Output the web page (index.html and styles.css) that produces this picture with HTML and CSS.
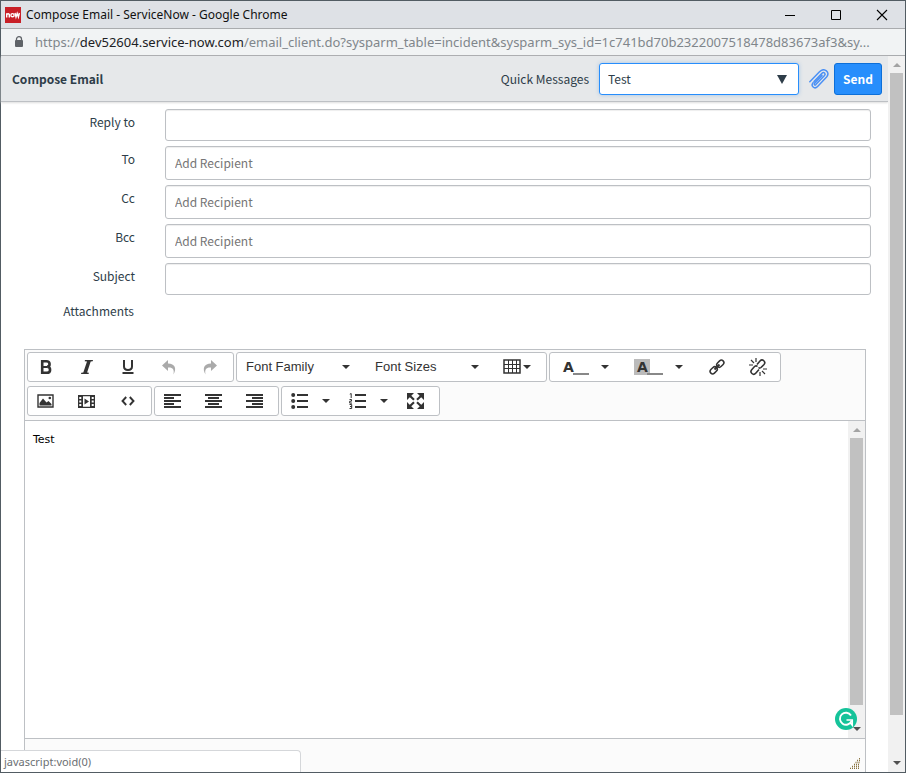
FILE: index.html
```html
<!DOCTYPE html>
<html lang="en">
<head>
<meta charset="utf-8">
<title>Compose Email - ServiceNow</title>
<link rel="stylesheet" href="styles.css">
</head>
<body>
<div class="window">
  <header class="titlebar">
    <svg class="favicon" width="16" height="16" viewBox="0 0 16 16" aria-hidden="true"><rect width="16" height="16" fill="#c81f27"/><g fill="none" stroke="#fff" stroke-width="1.4"><path d="M1.7 10.500V6.200M1.700 7.500q1.500-1.500 2.600 0v3"/><circle cx="7.500" cy="8.200" r="1.600"/><path d="M10 6l1 4 1.200-3.500L13.400 10l1-4"/></g></svg>
    <span class="title">Compose Email - ServiceNow - Google Chrome</span>
    <button class="winbtn" aria-label="Minimize"><svg width="12" height="12" viewBox="0 0 12 12"><path d="M1 6.500h10" stroke="#000"/></svg></button>
    <button class="winbtn" aria-label="Maximize"><svg width="12" height="12" viewBox="0 0 12 12"><path d="M1.500 1.500h9v9h-9z" fill="none" stroke="#000"/></svg></button>
    <button class="winbtn" aria-label="Close"><svg width="12" height="12" viewBox="0 0 12 12"><path d="M1 1l10 10M11 1L1 11" stroke="#000" stroke-width="1.100"/></svg></button>
  </header>
  <div class="address">
    <svg width="10" height="12" viewBox="0 0 10 12" aria-hidden="true"><path d="M2.500 5V3a2.500 2.300 0 0 1 5 0v2" fill="none" stroke="#5f6368" stroke-width="1.300"/><rect x="1" y="4" width="8" height="7" rx="1" fill="#5f6368"/></svg>
    <span class="url">https://<b>dev52604.service-now.com</b>/email_client.do?sysparm_table=incident&amp;sysparm_sys_id=1c741bd70b2322007518478d83673af3&amp;sy...</span>
  </div>
  <div class="viewport">
    <main class="page">
      <div class="header">
        <h1>Compose Email</h1>
        <label for="quick">Quick Messages</label>
        <div class="select">
          <select id="quick"><option>Test</option></select>
          <svg width="10" height="9" viewBox="0 0 10 9" aria-hidden="true"><path d="M0 0h10L5 9z" fill="#2e3d49"/></svg>
        </div>
        <button class="clip" aria-label="Add attachment"><svg width="20" height="20" viewBox="0 0 20 20" fill="none" stroke="#4a90f5" stroke-width="1.500" stroke-linecap="round" stroke-linejoin="round"><path d="M5 12.500l8-8.300c1.800-1.800 4.200.4 2.500 2.300l-8.700 9.100c-.9.900-2.200-.3-1.300-1.300l7.500-7.900"/><path d="M.8 12.700l9.700-10c4.800-4.600 11.300.6 7.100 5.300l-9 9.500c-3.200 3.300-7.200-.6-4.500-3.900"/></svg></button>
        <button class="send">Send</button>
      </div>
      <form class="fields">
        <label for="reply">Reply to</label><input id="reply" type="text">
        <label for="to">To</label><input id="to" class="recipient" type="text" placeholder="Add Recipient">
        <label for="cc">Cc</label><input id="cc" class="recipient" type="text" placeholder="Add Recipient">
        <label for="bcc">Bcc</label><input id="bcc" class="recipient" type="text" placeholder="Add Recipient">
        <label for="subject">Subject</label><input id="subject" type="text">
        <span class="fieldname">Attachments</span>
      </form>
      <section class="editor">
        <div class="toolbar">
          <div class="row">
            <div class="group">
              <button class="tool" aria-label="Bold"><svg width="16" height="16" viewBox="0 0 16 16"><path d="M4.200 2.300v11.500h4.300c5 0 4.300-5.800.7-6 3.300-.6 3.300-5.500-.9-5.500z" fill="none" stroke="#333" stroke-width="2.600"/><path d="M4 8h5" stroke="#333" stroke-width="2"/></svg></button>
              <button class="tool" aria-label="Italic"><svg width="16" height="16" viewBox="0 0 16 16" fill="#333"><path d="M6 1h8l-.3 1.200-2 .4-3.600 10.800 1.800.4-.3 1.200H2l.3-1.200 2-.4L8 2.600l-2.300-.4z"/></svg></button>
              <button class="tool" aria-label="Underline"><svg width="16" height="16" viewBox="0 0 16 16"><path d="M4 1v6.500c0 4.600 8 4.600 8 0V1" fill="none" stroke="#333" stroke-width="2"/><path d="M2.500 14h11" stroke="#333" stroke-width="2"/></svg></button>
              <button class="tool" aria-label="Undo"><svg width="16" height="16" viewBox="0 0 16 16" fill="#aaa"><path d="M7 1v3.500c7 0 9 5 5.500 11 .9-5-.5-7.300-5.500-7V12L1 6.500z"/></svg></button>
              <button class="tool" aria-label="Redo"><svg width="16" height="16" viewBox="0 0 16 16" fill="#aaa"><path d="M9 1v3.500c-7 0-9 5-5.500 11-.9-5 .5-7.300 5.500-7V12l6-5.500z"/></svg></button>
            </div>
            <div class="group">
              <button class="menu">Font Family<i class="caret"></i></button>
              <button class="menu">Font Sizes<i class="caret"></i></button>
              <button class="tabletool" aria-label="Table"><svg width="18" height="16" viewBox="0 0 18 16"><path d="M1 1h16v13H1z" fill="none" stroke="#333" stroke-width="1.500"/><path d="M1 5.500h16M1 9.500h16M5.500 1v13M9.500 1v13M13.500 1v13" stroke="#333"/></svg><i class="caret"></i></button>
            </div>
            <div class="group">
              <button class="color" aria-label="Text color"><span class="letter">A</span><span class="swatch"></span><i class="caret"></i></button>
              <button class="color" aria-label="Background color"><span class="letter filled">A</span><span class="swatch"></span><i class="caret"></i></button>
              <button class="tool link" aria-label="Insert link"><svg width="18" height="18" viewBox="0 0 18 18" fill="none" stroke="#333" stroke-width="1.500"><rect x="-4" y="-2.500" width="8" height="5" rx="2.500" transform="translate(12.300 5.700) rotate(-45)"/><rect x="-4" y="-2.500" width="8" height="5" rx="2.500" transform="translate(5.700 12.300) rotate(-45)"/><path d="M6.500 11.500l5-5" stroke-width="2"/></svg></button>
              <button class="tool link" aria-label="Remove link"><svg width="18" height="18" viewBox="0 0 18 18" fill="none" stroke="#333" stroke-width="1.600"><path d="M8 6.500l3-3.500c2.500-2.700 6.300.8 4 3.500L12 9.500c-1 .8-2 .5-2.500 0M8.500 8.500c-1-1-2-.8-3 0L2.700 11.700c-2.300 2.700 1.600 6.200 4 3.500L10 11.500"/><path d="M2 2l3 3M7 0v4M0 7h4M13 13l3 3M11 14v4M14 11h4" stroke-width="1.200"/></svg></button>
            </div>
          </div>
          <div class="row">
            <div class="group">
              <button class="tool" aria-label="Insert image"><svg width="17" height="14" viewBox="0 0 17 14"><path d="M1 1h15v12H1z" fill="none" stroke="#333" stroke-width="1.400"/><path d="M2.500 11.500V9l3.500-4.500 3.500 4L11.500 7l3 3v1.500z" fill="#333"/><circle cx="12.800" cy="4" r="1.300" fill="#333"/></svg></button>
              <button class="tool" aria-label="Insert video"><svg width="17" height="13" viewBox="0 0 17 13"><path d="M0 0h17v13H0z" fill="#333"/><path d="M5 1.300h7v10.400H5zM1.300 2h2v2h-2zM1.300 5.500h2v2h-2zM1.300 9h2v2h-2zM13.700 2h2v2h-2zM13.700 5.500h2v2h-2zM13.700 9h2v2h-2z" fill="#fff"/><path d="M6.500 3.500L11 6.500l-4.500 3z" fill="#333"/></svg></button>
              <button class="tool" aria-label="Source code"><svg width="14" height="10" viewBox="0 0 14 10" fill="none" stroke="#333" stroke-width="1.900"><path d="M5.200 1L1.500 5l3.700 4M8.800 1l3.700 4-3.700 4"/></svg></button>
            </div>
            <div class="group">
              <button class="tool" aria-label="Align left"><svg width="17" height="14" viewBox="0 0 17 14" fill="#333"><path d="M0 0h17v2H0zM0 3h10v2H0zM0 6h17v2H0zM0 9h10v2H0zM0 12h17v2H0z"/></svg></button>
              <button class="tool" aria-label="Align center"><svg width="17" height="14" viewBox="0 0 17 14" fill="#333"><path d="M0 0h17v2H0zM3 3h11v2H3zM0 6h17v2H0zM3 9h11v2H3zM0 12h17v2H0z"/></svg></button>
              <button class="tool" aria-label="Align right"><svg width="17" height="14" viewBox="0 0 17 14" fill="#333"><path d="M0 0h17v2H0zM6 3h11v2H6zM0 6h17v2H0zM6 9h11v2H6zM0 12h17v2H0z"/></svg></button>
            </div>
            <div class="group">
              <button class="list" aria-label="Bullet list"><svg width="17" height="16" viewBox="0 0 17 16" fill="#333"><circle cx="2.200" cy="2" r="2"/><circle cx="2.200" cy="8" r="2"/><circle cx="2.200" cy="14" r="2"/><path d="M6 1h11v2H6zM6 7h11v2H6zM6 13h11v2H6z"/></svg><i class="caret"></i></button>
              <button class="list" aria-label="Numbered list"><svg width="17" height="16" viewBox="0 0 17 16" fill="#333"><path d="M6 1h11v2H6zM6 7h11v2H6zM6 13h11v2H6z"/><path d="M.8 1.200L2.200.500V5M.5 6.500h2v1.700h-1.800v1.900h2.300M.5 11.500h2.200v4H.5M1 13.500h1.700" fill="none" stroke="#333"/></svg><i class="caret"></i></button>
              <button class="tool" aria-label="Fullscreen"><svg width="17" height="16" viewBox="0 0 17 16"><path d="M0 0h7L0 7zM17 0v7l-7-7zM0 16V9l7 7zM17 16h-7l7-7z" fill="#333"/><path d="M2 2l5 4.700M15 2l-5 4.700M2 14l5-4.700M15 14l-5-4.700" stroke="#333" stroke-width="2.200"/></svg></button>
            </div>
          </div>
        </div>
        <div class="body">
          <div class="content" contenteditable="true" role="textbox" aria-label="Message body">Test</div>
          <div class="scrollbar"><i class="up"></i><i class="thumb"></i><i class="down"></i></div>
          <svg class="grammarly" width="22" height="22" viewBox="0 0 22 22" aria-hidden="true"><circle cx="11" cy="11" r="11" fill="#15c39a"/><path d="M16 7.500A6 6 0 1 0 16.500 13" fill="none" stroke="#fff" stroke-width="1.900"/><path d="M11.500 12h5.700v5l-2-2.300" fill="none" stroke="#fff" stroke-width="1.700"/></svg>
        </div>
        <footer class="status"><svg width="11" height="11" viewBox="0 0 11 11" aria-hidden="true"><path d="M9 .5h1M7 2.500h3M5.500 4.500H10M4 6.500h6M2 8.500h8M0 10.500h10" stroke="#8a7440" stroke-dasharray="1 1" stroke-width="1.400"/></svg></footer>
      </section>
    </main>
    <div class="scrollbar outer"><i class="up"></i><i class="thumb"></i><i class="down"></i></div>
  </div>
  <div class="linkstatus">javascript:void(0)</div>
</div>
</body>
</html>
```

FILE: styles.css
```css
* { box-sizing: border-box; }
body { margin: 0; font: 12px/20px "Noto Sans CJK SC", sans-serif; color: #2e3d49; }
button { border: 0; background: none; padding: 0; color: inherit; font: inherit; }
svg { display: block; flex: none; }

.window { position: relative; display: flex; flex-direction: column; height: 100vh; border: 1px solid #525c63; background: #fff; }
.titlebar { display: flex; align-items: center; height: 28px; padding-left: 4px; background: #dee1e6; border-bottom: 1px solid #a9abae; font: 12px/16px "Noto Sans", sans-serif; color: #111; }
.title { flex: 1; margin-left: 5px; }
.winbtn { display: grid; place-items: center; width: 46px; height: 27px; }
.address { display: flex; align-items: center; height: 27px; padding: 0 10px 0 13px; background: #f1f3f4; border-bottom: 1px solid #a9abae; font: 13px/20px "Noto Sans", sans-serif; color: #80868b; }
.url { flex: 1; margin-left: 11px; overflow: hidden; white-space: nowrap; text-overflow: ellipsis; }
.url b { font-weight: normal; color: #202124; }

.viewport { display: flex; flex: 1; min-height: 0; }
.page { display: flex; flex: 1; flex-direction: column; min-width: 0; }
.header { display: flex; align-items: center; height: 46px; padding: 0 6px 0 11px; background: #e6e8ea; border-bottom: 1px solid #bdc0c4; box-shadow: 0 1px 2px #ddd; }
.header h1 { flex: 1; margin: 0; font-size: 12px; line-height: 20px; font-weight: bold; }
.select { position: relative; width: 200px; margin-left: 10px; }
.select select { display: block; width: 100%; height: 32px; padding: 0 8px; appearance: none; border: 1px solid #278efc; border-radius: 3px; background: #fff; box-shadow: 0 0 4px #a9c5e4; font: inherit; color: inherit; }
.select svg { position: absolute; top: 12px; right: 12px; pointer-events: none; }
.clip { margin: 0 5px 0 10px; }
.send { width: 48px; height: 32px; border: 1px solid #0d6fd8; border-radius: 3px; background: #278efc; color: #fff; font-weight: bold; }

.fields { display: grid; grid-template-columns: 134px 1fr; column-gap: 30px; row-gap: 5px; padding: 7px 17px 0 0; }
.fields label { padding-top: 3px; text-align: right; }
.fieldname { padding: 1px 1px 1px 0; text-align: right; }
.fields input { width: 100%; height: 32px; padding: 0 9px 2px; border: 1px solid #bdc0c4; border-radius: 3px; background: #fff; box-shadow: inset 0 1px 1px #eee; font: inherit; color: inherit; }
.fields .recipient { height: 34px; }
.fields input::placeholder { color: #757575; opacity: 1; }

.editor { display: flex; flex: 1; flex-direction: column; min-height: 0; margin: 27px 22px 0 23px; border: 1px solid #bdc0c4; border-bottom: 0; }
.toolbar { display: grid; gap: 4px; padding: 2px 2px 4px; background: #fbfbfb; border-bottom: 1px solid #bdc0c4; }
.row { display: flex; gap: 2px; }
.group { display: flex; height: 30px; border: 1px solid #bdc0c4; border-radius: 3px; background: #fff; }
.group button { display: flex; align-items: center; height: 28px; color: #333; }
.group .tool { justify-content: center; width: 41px; padding-right: 6px; }
.group .link { padding-right: 3px; }
.group .menu { justify-content: space-between; width: 129px; padding: 0 16px 0 9px; font: 13px/20px "Liberation Sans", sans-serif; }
.group .tabletool { gap: 2px; width: 51px; padding-left: 8px; }
.group .color { width: 74px; padding-left: 10px; }
.group .list { gap: 14px; width: 58px; padding-left: 9px; }
.caret { flex: none; border: 4px solid transparent; border-top-color: #333; border-bottom: 0; }
.letter { width: 16px; padding-left: 1px; text-align: center; font: bold 14px/16px "DejaVu Sans", sans-serif; }
.filled { background: #bbb; }
.swatch { width: 16px; height: 2px; margin: 14px 12px 0 -3px; background: #888; }

.body { position: relative; display: flex; flex: 1; min-height: 0; }
.content { flex: 1; padding: 9px 8px; font: 11px/20px "DejaVu Sans", sans-serif; color: #000; outline: 0; }
.grammarly { position: absolute; right: 8px; bottom: 8px; }
.status { display: flex; justify-content: flex-end; align-items: flex-end; height: 34px; padding: 0 4px 3px; border-top: 1px solid #bdc0c4; background: #fbfbfb; }

.scrollbar { display: flex; flex-direction: column; align-items: center; justify-content: space-between; width: 17px; padding: 7px 0; background: #f1f1f1; }
.thumb { flex: 1; width: 13px; margin: 6px 0 22px; background: #c1c1c1; }
.outer .thumb { margin-bottom: 46px; }
.up, .down { border: 4px solid transparent; }
.up { border-top: 0; border-bottom-color: #a3a3a3; }
.down { border-bottom: 0; border-top-color: #505050; }

.linkstatus { position: absolute; left: 0; bottom: 0; width: 300px; height: 22px; padding: 0 3px; border: 1px solid #d5d7da; border-left: 0; border-bottom: 0; border-radius: 0 4px 0 0; background: #fff; font: 11px/21px "Noto Sans", sans-serif; color: #6b6f73; }
```
